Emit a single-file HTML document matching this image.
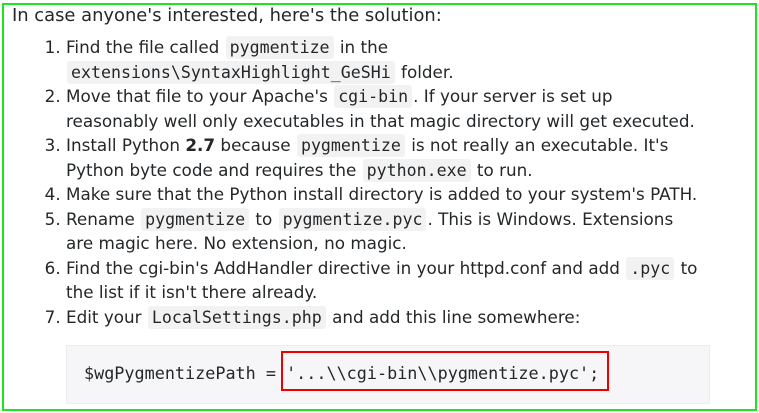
<!DOCTYPE html>
<html><head><style>
body{margin:0;width:759px;height:413px;background:#fff;overflow:hidden;font-family:"DejaVu Sans","Liberation Sans",sans-serif;color:#242729;font-size:16.8px}
.frame{position:absolute;left:2px;top:3px;width:751px;height:404px;border:2px solid #1fe51f}
p{position:absolute;left:12px;top:5px;margin:0;line-height:22px;font-size:17.9px;white-space:nowrap}
ol{position:absolute;left:0;top:35px;margin:0;padding-left:66px;line-height:24.5px;width:690px;white-space:nowrap}
li{padding:0;height:auto}
code{font-family:"DejaVu Sans Mono","Liberation Mono",monospace;font-size:16.6px;line-height:1;background:#f2f2f3;border-radius:3px;padding:2px 4px;margin:0 1px}
.pre{position:absolute;left:66px;top:345px;width:642px;height:57px;background:#f6f6f8;border:1px solid #ececec}
.pre span{position:absolute;left:17px;top:17px;font-family:"DejaVu Sans Mono",monospace;font-size:16.8px;white-space:pre}
.red{position:absolute;left:281px;top:351px;width:328px;height:40px;border:2px solid #e00;box-sizing:border-box}
</style></head><body>
<div class="frame"></div>
<p>In case anyone's interested, here's the solution:</p>
<ol>
<li>Find the file called <code>pygmentize</code> in the<br><code>extensions\SyntaxHighlight_GeSHi</code> folder.</li>
<li>Move that file to your Apache's <code>cgi-bin</code>. If your server is set up<br>reasonably well only executables in that magic directory will get executed.</li>
<li>Install Python <b>2.7</b> because <code>pygmentize</code> is not really an executable. It's<br>Python byte code and requires the <code>python.exe</code> to run.</li>
<li>Make sure that the Python install directory is added to your system's PATH.</li>
<li>Rename <code>pygmentize</code> to <code>pygmentize.pyc</code>. This is Windows. Extensions<br>are magic here. No extension, no magic.</li>
<li>Find the cgi-bin's AddHandler directive in your httpd.conf and add <code>.pyc</code> to<br>the list if it isn't there already.</li>
<li>Edit your <code>LocalSettings.php</code> and add this line somewhere:</li>
</ol>
<div class="pre"><span>$wgPygmentizePath = '...\\cgi-bin\\pygmentize.pyc';</span></div>
<div class="red"></div>
</body></html>
